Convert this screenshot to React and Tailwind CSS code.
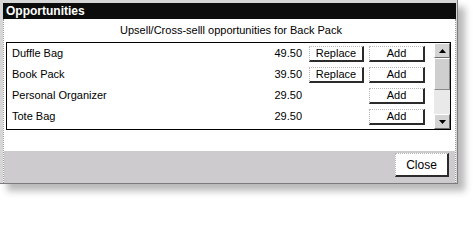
import React from 'react'

const font = { fontFamily: "'Liberation Sans', Arial, sans-serif" }

const items = [
  { name: 'Duffle Bag', price: '49.50', replace: true },
  { name: 'Book Pack', price: '39.50', replace: true },
  { name: 'Personal Organizer', price: '29.50', replace: false },
  { name: 'Tote Bag', price: '29.50', replace: false },
]

function FlatButton({ children, className = '' }) {
  return (
    <button
      className={`flex items-center justify-center bg-white text-black text-[11px] leading-none border-t border-l border-r-2 border-b-2 border-t-[#b8b8b8] border-l-[#b8b8b8] border-r-[#2b2b2b] border-b-[#2b2b2b] [border-style:dotted_solid_solid_dotted] ${className}`}
    >
      {children}
    </button>
  )
}

function ScrollButton({ down }) {
  return (
    <div className="h-[15px] flex items-center justify-center bg-[#d4d4d4] border-t border-l border-white border-r border-b border-r-[#6e6e6e] border-b-[#6e6e6e]">
      <svg width="7" height="4" viewBox="0 0 7 4">
        {down ? <polygon points="0,0 7,0 3.5,4" fill="#000" /> : <polygon points="0,4 7,4 3.5,0" fill="#000" />}
      </svg>
    </div>
  )
}

export default function App() {
  return (
    <div className="w-[474px] h-[201px] bg-white" style={font}>
      <div className="w-[458px] h-[184px] flex flex-col bg-[#d6d6d6] pt-[3px] pl-[3px] pr-[1px] border-r border-b border-[#7c7c7c] shadow-[7px_7px_7px_rgba(0,0,0,0.28)]">
        {/* Title bar */}
        <div className="h-[16px] shrink-0 bg-[#0c0c0c] text-white font-bold text-[12px] leading-none pl-[3px] flex items-center">
          Opportunities
        </div>

        {/* Body */}
        <div className="flex-1 flex flex-col bg-white border-l border-r border-dotted border-[#9c9c9c]">
          <div className="h-[23px] shrink-0 flex items-center justify-center text-[11px] text-black pl-[3px]">
            Upsell/Cross-selll opportunities for Back Pack
          </div>

          {/* List */}
          <div className="ml-[2px] w-[445px] h-[88px] shrink-0 border border-black flex">
            <div className="flex-1 flex flex-col">
              {items.map((it) => (
                <div key={it.name} className="h-[21px] flex items-center text-[11px] text-black pl-[5px] pr-[9px]">
                  <span className="flex-1">{it.name}</span>
                  <span className="text-right">{it.price}</span>
                  <div className="ml-[7px] w-[55px]">
                    {it.replace && <FlatButton className="w-[55px] h-[16px]">Replace</FlatButton>}
                  </div>
                  <FlatButton className="ml-[5px] w-[56px] h-[16px]">Add</FlatButton>
                </div>
              ))}
            </div>
            <div className="w-[16px] flex flex-col">
              <ScrollButton />
              <div className="h-[32px] bg-[#cfcfcf] border-t border-l border-white border-r border-b border-r-[#8a8a8a] border-b-[#8a8a8a]" />
              <div className="flex-1 bg-[#e9e9e9]" />
              <ScrollButton down />
            </div>
          </div>

          <div className="flex-1" />

          {/* Footer */}
          <div className="h-[32px] shrink-0 bg-[#cdcbce] flex justify-end items-start pt-[2px] pr-[6px]">
            <FlatButton className="w-[54px] h-[24px] text-[12px]">Close</FlatButton>
          </div>
        </div>
      </div>
    </div>
  )
}
